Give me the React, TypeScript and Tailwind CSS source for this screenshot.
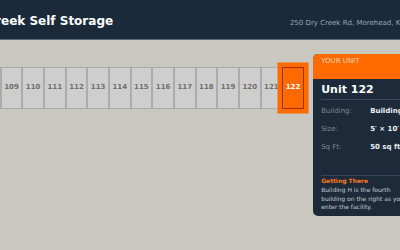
import React from 'react';

const units = [108, 109, 110, 111, 112, 113, 114, 115, 116, 117, 118, 119, 120, 121, 122];
const selected = 122;

const details = [
  { label: 'Building:', value: 'Building H' },
  { label: 'Size:', value: '5′ × 10′' },
  { label: 'Sq Ft:', value: '50 sq ft' },
];

const App: React.FC = () => {
  return (
    <div className="w-[400px] h-[250px] overflow-hidden bg-[#c8c7c0] font-['DejaVu_Sans',sans-serif]">
      {/* Top bar */}
      <header className="h-[39.5px] bg-[#1b2a3b] border-b-[1.5px] border-[#5f6773] flex items-baseline pt-[14px] whitespace-nowrap">
        <h1 className="-ml-[41.6px] text-[12px] leading-[14px] font-bold text-white shrink-0">
          Dry Creek Self Storage
        </h1>
        <span className="ml-auto -mr-[4.3px] text-[7px] leading-[14px] text-[#9aa6b4] shrink-0">
          250 Dry Creek Rd, Morehead, KY
        </span>
      </header>

      <main className="flex items-start pt-[14.5px]">
        {/* Unit strip */}
        <div className="flex mt-[12.5px] -ml-[21px] shrink-0">
          {units.map((u) =>
            u === selected ? (
              <div
                key={u}
                className="w-[21.67px] h-[42px] shrink-0 bg-[#ff6a00] border-[1.5px] border-[#9c3500] ring-[4.5px] ring-[#ff6a00] flex items-center justify-center text-[7px] font-bold text-white"
              >
                {u}
              </div>
            ) : (
              <div
                key={u}
                className="w-[21.67px] h-[42px] shrink-0 bg-[#cecece] border border-[#ababab] flex items-center justify-center text-[7px] font-bold text-[#6e6e6e]"
              >
                {u}
              </div>
            )
          )}
        </div>

        {/* Selected unit card */}
        <aside className="ml-[9.3px] w-[106px] shrink-0 rounded-[5px] overflow-hidden bg-[#1c2a3a]">
          <div className="h-[25px] bg-[#ff6b00] px-[8px] pt-[3px] text-[7px] leading-[9px] text-[#ffd3b3]">
            YOUR UNIT
          </div>
          <div className="px-[8px] pb-[4px]">
            <div className="pt-[4px] pb-[3px] border-b border-[#34465a] text-[11px] leading-[13px] font-bold text-white">
              Unit 122
            </div>
            <div className="mt-[2px]">
              {details.map((d) => (
                <div key={d.label} className="flex text-[7px] leading-[18px] whitespace-nowrap">
                  <span className="w-[49px] shrink-0 text-[#7d8997]">{d.label}</span>
                  <span className="font-bold text-[#eef1f4]">{d.value}</span>
                </div>
              ))}
            </div>
            <div className="mt-[19px] border-t border-[#34465a] pt-[1.3px] text-[6px] leading-[8.7px]">
              <div className="font-bold text-[#ff7a1a]">Getting There</div>
              <p className="text-[#c3cad2]">
                Building H is the fourth building on the right as you enter the facility.
              </p>
            </div>
          </div>
        </aside>
      </main>
    </div>
  );
};

export default App;
